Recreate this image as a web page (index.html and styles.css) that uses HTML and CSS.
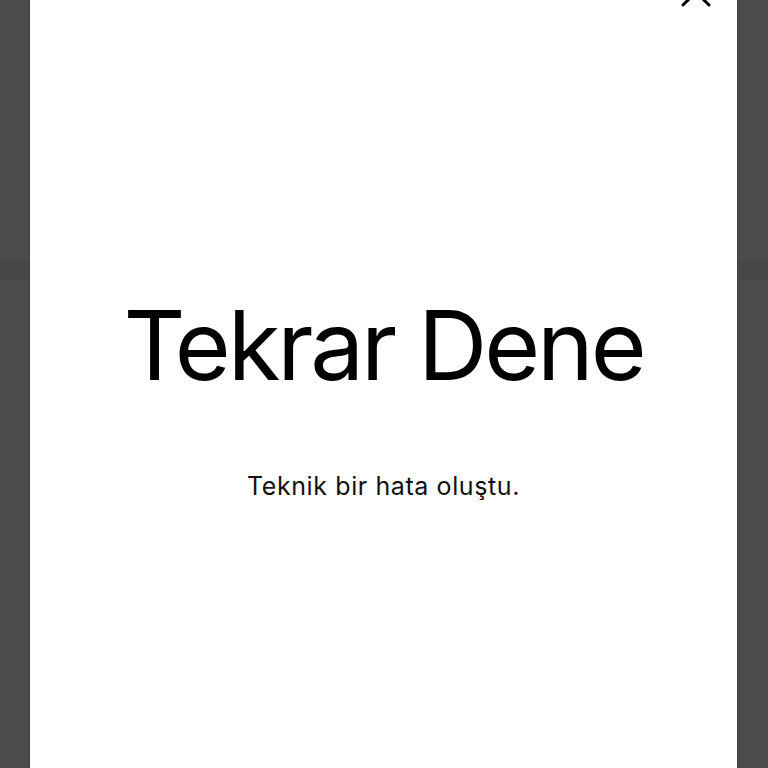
FILE: index.html
```html
<!DOCTYPE html>
<html lang="tr">
<head>
<meta charset="utf-8">
<title>Tekrar Dene</title>
<link rel="stylesheet" href="styles.css">
</head>
<body>
<div class="backdrop">
  <main class="sheet">
    <button class="close" aria-label="Kapat">
      <svg width="30" height="30" viewBox="0 0 30 30"><path d="M2 2 L28 28 M28 2 L2 28" stroke="#000" stroke-width="3" stroke-linecap="round" fill="none"/></svg>
    </button>
    <h1 class="title">Tekrar Dene</h1>
    <p class="message">Teknik bir hata oluştu.</p>
  </main>
</div>
</body>
</html>
```
FILE: styles.css
```css
html, body {
  margin: 0;
  padding: 0;
  height: 100%;
  background: #4b4b4b;
}
.backdrop {
  height: 100%;
  display: flex;
  padding: 0 31px 0 30px;
  box-sizing: border-box;
  background: linear-gradient(#4b4b4b 0, #4b4b4b 258px, #474747 262px, #474747 278px, #4b4b4b 282px);
}
.sheet {
  position: relative;
  flex: 1;
  background: #fff;
  display: flex;
  flex-direction: column;
  align-items: center;
  padding-top: 297px;
  box-shadow: -1px 0 0 #3f3f3f, 1px 0 0 #3f3f3f;
  font-family: Inter, "Liberation Sans", Arial, sans-serif;
  color: #000;
}
.close {
  position: absolute;
  top: -23px;
  right: 26px;
  width: 30px;
  height: 30px;
  padding: 0;
  border: 0;
  background: none;
}
.close svg { display: block; }
.title {
  margin: 0;
  font-size: 96px;
  line-height: 96px;
  font-weight: 400;
  letter-spacing: -3.1px;
}
.message {
  margin: 81px 0 0;
  font-size: 25px;
  line-height: 25px;
  letter-spacing: 0.6px;
  color: #111;
}
```
